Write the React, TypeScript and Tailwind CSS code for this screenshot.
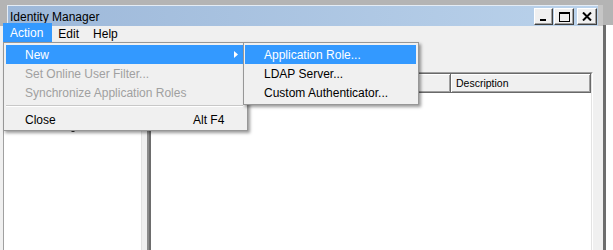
import React from "react";

function TitleButton({ children, w }: { children: React.ReactNode; w: string }) {
  return (
    <div
      className={`${w} h-[17px] flex items-center justify-center bg-[#f0f0f0] border border-t-white border-l-white border-r-[#404040] border-b-[#404040] shadow-[inset_-1px_-1px_0_#a0a0a0]`}
    >
      {children}
    </div>
  );
}

export default function App() {
  return (
    <div className="relative w-[613px] h-[250px] overflow-hidden bg-[#b4b4b4] text-[12px] leading-[16px] text-black font-['Liberation_Sans',Arial,sans-serif]">
      <div className="flex flex-col h-full">
        <div className="h-[5px] shrink-0" />
        <div className="flex flex-1 min-h-0">
          {/* window */}
          <div className="w-[603px] flex flex-col bg-[#f0f0f0]">
            {/* title row */}
            <div className="flex h-[21px] shrink-0 bg-[#b4b4b4]">
              <div className="w-[7px]" />
              <div className="flex-1 flex items-start border-t border-l border-[#e4ecf5] bg-[linear-gradient(to_right,#9db8d9,#bad2eb)]">
                <div className="pl-[2px] pt-[3px] flex-1">Identity Manager</div>
                <div className="flex pt-[2px] pr-[1px] gap-px">
                  <TitleButton w="w-[19px]">
                    <div className="w-[6px] h-[2px] bg-black mt-[6px] -ml-[1px]" />
                  </TitleButton>
                  <TitleButton w="w-[20px]">
                    <div className="w-[11px] h-[10px] border border-t-2 border-black" />
                  </TitleButton>
                  <div className="w-px" />
                  <TitleButton w="w-[20px]">
                    <svg width="10" height="9" viewBox="0 0 10 9">
                      <path d="M1 0.5 L9 8.5 M9 0.5 L1 8.5" stroke="black" strokeWidth="2" fill="none" />
                    </svg>
                  </TitleButton>
                </div>
              </div>
              <div className="w-[5px] bg-[#c6c6c6]" />
            </div>
            {/* menu bar */}
            <div className="h-[16px] shrink-0 flex items-center bg-[#f0f0f0]">
              <span className="ml-[10px]">Action</span>
              <span className="ml-[15px]">Edit</span>
              <span className="ml-[14px]">Help</span>
            </div>
            {/* body */}
            <div className="flex-1 flex pl-[3px] pt-[2px] min-h-0">
              <div className="w-[139px] bg-white border-l border-l-[#a0a0a0] border-r border-r-[#e3e3e3]">
                <svg className="mt-[86px] ml-[66px]" width="6" height="3" viewBox="0 0 6 3">
                  <path d="M0.5 0.5 Q3 3 5.5 0.5" stroke="#333" strokeWidth="1" fill="none" />
                </svg>
              </div>
              <div className="w-[5px]" />
              <div className="flex-1 flex flex-col">
                <div className="h-[28px] shrink-0" />
                <div className="flex-1 flex">
                  <div className="w-[446px] flex flex-col border-t border-t-[#a0a0a0] border-l-2 border-l-[#8c8c8c] border-r border-r-white">
                    <div className="flex-1 flex flex-col border-t border-t-[#696969] border-l-2 border-l-[#6d6d6d] border-r border-r-[#e3e3e3] bg-white">
                      <div className="flex h-[19px] shrink-0 text-[10.5px]">
                        <div className="w-[300px] bg-[#f0f0f0] border-r border-b border-[#696969] shadow-[inset_1px_1px_0_#fff,inset_-1px_-1px_0_#a0a0a0]" />
                        <div className="flex-1 flex items-center pl-[5px] bg-[#f0f0f0] border-r border-b border-[#696969] shadow-[inset_1px_1px_0_#fff,inset_-1px_-1px_0_#a0a0a0]">
                          Description
                        </div>
                      </div>
                      <div className="flex-1" />
                    </div>
                  </div>
                  <div className="flex-1" />
                </div>
              </div>
            </div>
          </div>
          {/* right strip */}
          <div className="flex-1 flex flex-col">
            <div className="h-[20px] bg-[#b4b4b4]" />
            <div className="flex-1 flex">
              <div className="w-[3px] bg-[#6d6d6d]" />
              <div className="flex-1 bg-white" />
            </div>
          </div>
        </div>
      </div>

      {/* Action highlight */}
      <div className="absolute left-[3px] top-[23px] w-[49px] h-[19px] bg-[#3399ff] text-white flex items-center pl-[7px]">
        Action
      </div>

      {/* main menu */}
      <div className="absolute left-[3px] top-[42px] w-[245px] h-[89px] bg-[#f0f0f0] border border-[#979797] shadow-[2px_2px_3px_rgba(0,0,0,0.4)] pt-[2px] pl-[2px] pr-[4px]">
        <div className="relative h-[19px] flex items-center pl-[19px] bg-[#3399ff] text-white">
          New
          <svg className="absolute left-[228px] top-[6px]" width="4" height="7" viewBox="0 0 4 7">
            <path d="M0 0 L4 3.5 L0 7 Z" fill="white" />
          </svg>
        </div>
        <div className="h-[19px] flex items-center pl-[19px] text-[#a0a0a0]">Set Online User Filter...</div>
        <div className="h-[19px] flex items-center pl-[19px] text-[#a0a0a0]">Synchronize Application Roles</div>
        <div className="h-[8px] flex items-center">
          <div className="w-full h-[2px] border-t border-t-[#c8c8c8] border-b border-b-white" />
        </div>
        <div className="h-[19px] flex items-center pl-[19px]">
          <span className="w-[168px]">Close</span>
          <span>Alt F4</span>
        </div>
      </div>

      {/* submenu */}
      <div className="absolute left-[243px] top-[42px] w-[176px] h-[63px] bg-[#f0f0f0] border border-[#979797] shadow-[2px_2px_3px_rgba(0,0,0,0.4)] pt-[2px] pl-px pr-[2px]">
        <div className="h-[19px] flex items-center pl-[19px] bg-[#3399ff] text-white">Application Role...</div>
        <div className="h-[19px] flex items-center pl-[19px]">LDAP Server...</div>
        <div className="h-[19px] flex items-center pl-[19px]">Custom Authenticator...</div>
      </div>
    </div>
  );
}
